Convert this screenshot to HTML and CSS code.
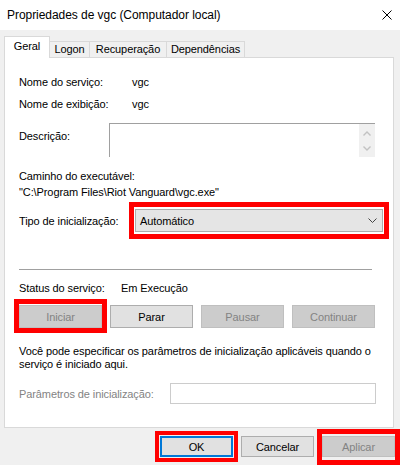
FILE: index.html
```html
<!DOCTYPE html>
<html lang="pt-BR">
<head>
<meta charset="utf-8">
<title>Propriedades de vgc (Computador local)</title>
<link rel="stylesheet" href="styles.css">
</head>
<body>
<div class="window">
  <div class="titlebar">
    <span class="title">Propriedades de vgc (Computador local)</span>
    <svg class="close" width="10" height="10" viewBox="0 0 10 10"><path d="M0.5 0.5 L9.5 9.5 M9.5 0.5 L0.5 9.5" stroke="#000" stroke-width="1" fill="none"/></svg>
  </div>
  <div class="tabs">
    <div class="tab active tab-geral">Geral</div>
    <div class="tab tab-logon">Logon</div>
    <div class="tab tab-rec">Recuperação</div>
    <div class="tab tab-dep">Dependências</div>
  </div>
  <div class="panel">
    <div class="row r-line">
      <span class="lbl lbl-name">Nome do serviço:</span><span>vgc</span>
    </div>
    <div class="row r-line r-display">
      <span class="lbl lbl-name">Nome de exibição:</span><span>vgc</span>
    </div>
    <div class="row r-desc">
      <span class="lbl lbl-desc">Descrição:</span>
      <div class="descbox">
        <div class="vscroll">
          <svg width="8" height="5" viewBox="0 0 8 5"><path d="M0.5 4.5 L4 1 L7.5 4.5" stroke="#c2c2c2" stroke-width="1.4" fill="none"/></svg>
          <svg width="8" height="5" viewBox="0 0 8 5"><path d="M0.5 0.5 L4 4 L7.5 0.5" stroke="#c2c2c2" stroke-width="1.4" fill="none"/></svg>
        </div>
      </div>
    </div>
    <div class="path-block">
      <div>Caminho do executável:</div>
      <div>"C:\Program Files\Riot Vanguard\vgc.exe"</div>
    </div>
    <div class="row r-type">
      <span class="lbl lbl-type">Tipo de inicialização:</span>
      <div class="hl hl-combo">
        <div class="combo">
          <span>Automático</span>
          <svg width="9" height="5" viewBox="0 0 9 5"><path d="M0.5 0.5 L4.5 4.5 L8.5 0.5" stroke="#444" stroke-width="1" fill="none"/></svg>
        </div>
      </div>
    </div>
    <div class="sep"></div>
    <div class="row r-line r-status">
      <span class="lbl lbl-status">Status do serviço:</span><span>Em Execução</span>
    </div>
    <div class="btnrow">
      <div class="hl hl-start"><div class="btn dis">Iniciar</div></div>
      <div class="btn">Parar</div>
      <div class="btn dis">Pausar</div>
      <div class="btn dis">Continuar</div>
    </div>
    <p class="para">Você pode especificar os parâmetros de inicialização aplicáveis quando o<br>serviço é iniciado aqui.</p>
    <div class="row r-params">
      <span class="lbl lbl-params">Parâmetros de inicialização:</span>
      <div class="input"></div>
    </div>
  </div>
  <div class="footer">
    <div class="hl hl-ok"><div class="btn fbtn default">OK</div></div>
    <div class="btn fbtn">Cancelar</div>
    <div class="hl hl-apply"><div class="btn fbtn dis">Aplicar</div></div>
  </div>
</div>
</body>
</html>
```
FILE: styles.css
```css
html, body {
  margin: 0;
  padding: 0;
}
body {
  width: 400px;
  height: 465px;
  overflow: hidden;
  background: #f0f0f0;
  font-family: "Liberation Sans", Arial, sans-serif;
  font-size: 11px;
  letter-spacing: -0.1px;
  color: #000;
}
.window {
  width: 400px;
  height: 465px;
}
.titlebar {
  box-sizing: border-box;
  height: 30px;
  background: #fff;
  display: flex;
  align-items: center;
  justify-content: space-between;
  padding: 0 8px 1px 7px;
}
.title {
  font-size: 12px;
  letter-spacing: -0.05px;
}
.close {
  display: block;
}
.tabs {
  height: 27px;
  display: flex;
  align-items: flex-end;
  padding-left: 4px;
}
.tab {
  box-sizing: border-box;
  height: 16px;
  line-height: 14px;
  text-align: center;
  border: 1px solid #d9d9d9;
  border-bottom: none;
  background: #f0f0f0;
  margin-left: -1px;
}
.tab.active {
  margin-left: 0;
  height: 22px;
  line-height: 18px;
  background: #fff;
  margin-bottom: -1px;
  position: relative;
  z-index: 1;
}
.tab-geral { width: 46px; }
.tab-logon { width: 41px; }
.tab-rec { width: 78px; }
.tab-dep { width: 79px; }

.panel {
  box-sizing: border-box;
  height: 371px;
  margin: 0 6px 0 4px;
  border: 1px solid #d9d9d9;
  background: #fff;
  padding: 17px 0 0 14px;
}
.row {
  display: flex;
  align-items: center;
}
.r-line {
  height: 15px;
  line-height: 15px;
}
.lbl {
  flex: none;
}
.lbl-name { width: 113px; }
.r-display { margin-top: 7px; }
.r-desc {
  margin-top: 11px;
  align-items: flex-start;
}
.lbl-desc {
  width: 90px;
  padding-top: 6px;
  line-height: 15px;
}
.descbox {
  box-sizing: border-box;
  width: 266px;
  height: 34px;
  border-top: 1px solid #a0a0a0;
  border-left: 1px solid #a0a0a0;
  display: flex;
  justify-content: flex-end;
}
.vscroll {
  box-sizing: border-box;
  width: 16px;
  height: 33px;
  background: #f0f0f0;
  display: flex;
  flex-direction: column;
  justify-content: space-between;
  align-items: center;
  padding: 7px 0 6px;
}
.vscroll svg { display: block; }
.path-block {
  margin-top: 11px;
  line-height: 16px;
}
.r-type {
  margin-top: 9px;
  height: 23px;
}
.lbl-type { width: 116px; }
.hl {
  flex: none;
  border: 5px solid #ff0000;
}
.hl-combo {
  margin: -7px -6px;
  padding: 2px 1px;
}
.combo {
  box-sizing: border-box;
  width: 248px;
  height: 23px;
  background: #e5e5e5;
  border: 1px solid #adadad;
  display: flex;
  align-items: center;
  justify-content: space-between;
  padding: 0 5px 0 4px;
}
.combo svg { display: block; }
.sep {
  margin-top: 37px;
  width: 353px;
  height: 1px;
  background: #a0a0a0;
}
.r-status { margin-top: 11px; }
.lbl-status { width: 102px; }
.btnrow {
  margin-top: 9px;
  display: flex;
  align-items: flex-start;
  gap: 8px;
}
.btn {
  box-sizing: border-box;
  width: 83px;
  height: 23px;
  border: 1px solid #adadad;
  background: #e1e1e1;
  display: flex;
  align-items: center;
  justify-content: center;
}
.btn.dis {
  background: #cccccc;
  border-color: #bfbfbf;
  color: #838383;
}
.hl-start {
  margin: -6px -5px 0 -5px;
  padding: 1px 0 0 0;
}
.para {
  margin: 12px 0 0;
  line-height: 13px;
}
.r-params {
  margin-top: 12px;
  height: 21px;
}
.lbl-params {
  width: 151px;
  color: #838383;
}
.input {
  box-sizing: border-box;
  width: 206px;
  height: 21px;
  border: 1px solid #cccccc;
  background: #fff;
}
.footer {
  display: flex;
  justify-content: flex-end;
  align-items: flex-start;
  gap: 8px;
  padding: 8px 5px 0 0;
}
.fbtn {
  width: 73px;
  height: 21px;
}
.btn.default {
  border: 2px solid #0078d7;
}
.hl-ok {
  border-width: 4px;
  padding: 1px;
  margin: -5px -5px 0 -5px;
}
.hl-apply {
  padding: 2px 0 3px 0;
  margin: -7px -5px 0 -5px;
}
```
